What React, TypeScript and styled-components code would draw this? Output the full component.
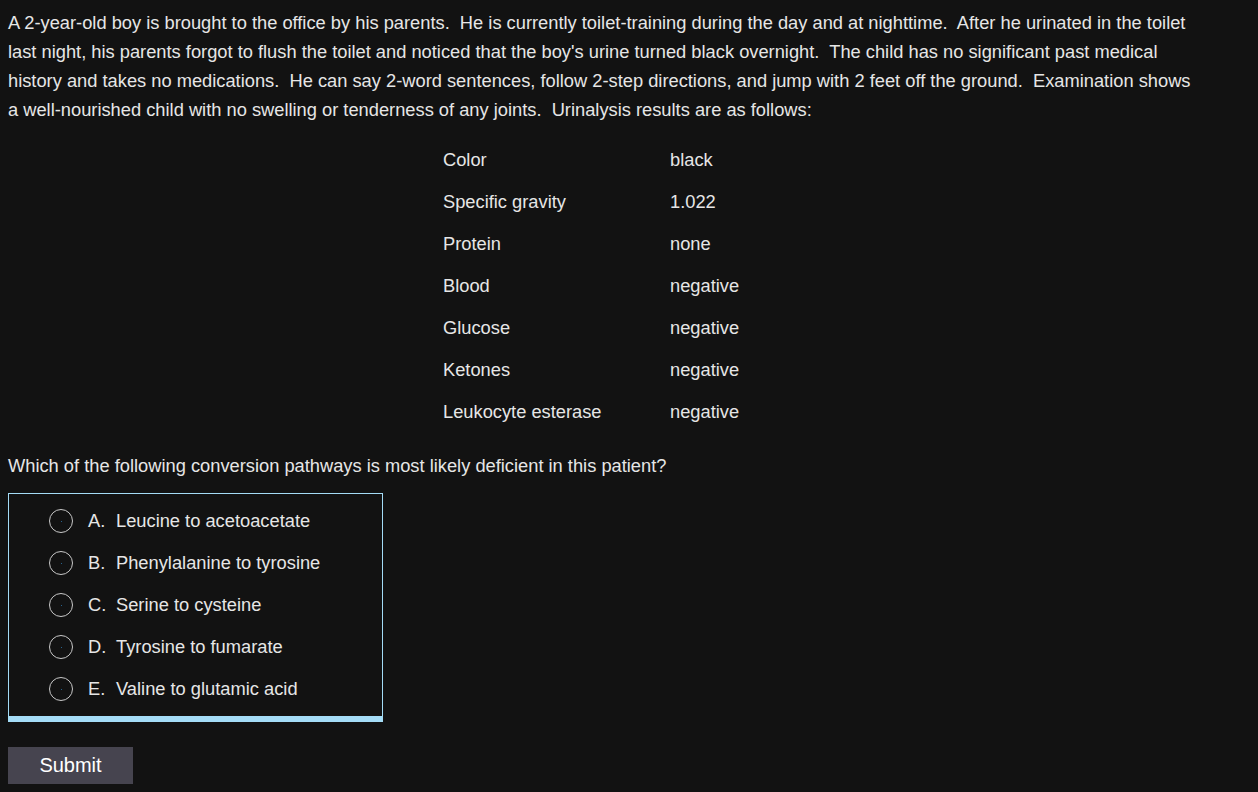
import React, { useState } from "react";
import styled, { createGlobalStyle } from "styled-components";

const GlobalStyle = createGlobalStyle`
  html, body {
    margin: 0;
    background: #121212;
  }
  body {
    padding: 8px;
    color: #e6e6e6;
    font-family: "Liberation Sans", Arial, sans-serif;
    font-size: 18.3px;
  }
`;

const Stem = styled.p`
  margin: 0;
  max-width: 1192px;
  line-height: 29px;
  white-space: pre-wrap;
`;

const LabTable = styled.table`
  margin: 15px auto 0;
  border-collapse: collapse;
  width: 388px;
`;

const LabCell = styled.td<{ $wide?: boolean }>`
  height: 42px;
  padding: 0 8px;
  width: ${(p) => (p.$wide ? "211px" : "auto")};
  vertical-align: middle;
`;

const Question = styled.p`
  margin: 18px 0 0;
  line-height: 29px;
`;

const Choices = styled.div`
  margin-top: 13px;
  width: 373px;
  border: 1px solid #a4dcf6;
  border-bottom: 6px solid #a4dcf6;
  padding: 6px 0 6px;
`;

const ChoiceRow = styled.label`
  display: flex;
  align-items: center;
  height: 42px;
  padding-left: 40px;
  cursor: pointer;
`;

const Radio = styled.span<{ $on: boolean }>`
  width: 24px;
  height: 24px;
  border-radius: 50%;
  border: 1px solid #c8c8c8;
  box-sizing: border-box;
  display: flex;
  align-items: center;
  justify-content: center;
  margin-right: 15px;
  &::after {
    content: "";
    width: ${(p) => (p.$on ? "12px" : "1px")};
    height: ${(p) => (p.$on ? "12px" : "1px")};
    border-radius: 50%;
    background: #2f7fb8;
  }
`;

const Letter = styled.span`
  width: 28px;
`;

const SubmitButton = styled.button`
  margin-top: 25px;
  width: 125px;
  height: 37px;
  border: none;
  background: #46444f;
  color: #ffffff;
  font-family: "Liberation Sans", Arial, sans-serif;
  font-size: 20px;
  cursor: pointer;
`;

const labs = [
  ["Color", "black"],
  ["Specific gravity", "1.022"],
  ["Protein", "none"],
  ["Blood", "negative"],
  ["Glucose", "negative"],
  ["Ketones", "negative"],
  ["Leukocyte esterase", "negative"],
];

const options = [
  ["A.", "Leucine to acetoacetate"],
  ["B.", "Phenylalanine to tyrosine"],
  ["C.", "Serine to cysteine"],
  ["D.", "Tyrosine to fumarate"],
  ["E.", "Valine to glutamic acid"],
];

const App: React.FC = () => {
  const [picked, setPicked] = useState<number | null>(null);

  return (
    <div>
      <GlobalStyle />
      <Stem>
        A 2-year-old boy is brought to the office by his parents.  He is currently toilet-training during the day and at nighttime.  After he urinated in the toilet last night, his parents forgot to flush the toilet and noticed that the boy's urine turned black overnight.  The child has no significant past medical history and takes no medications.  He can say 2-word sentences, follow 2-step directions, and jump with 2 feet off the ground.  Examination shows a well-nourished child with no swelling or tenderness of any joints.  Urinalysis results are as follows:
      </Stem>
      <LabTable>
        <tbody>
          {labs.map(([name, value]) => (
            <tr key={name}>
              <LabCell $wide>{name}</LabCell>
              <LabCell>{value}</LabCell>
            </tr>
          ))}
        </tbody>
      </LabTable>
      <Question>Which of the following conversion pathways is most likely deficient in this patient?</Question>
      <Choices>
        {options.map(([letter, text], i) => (
          <ChoiceRow key={letter} onClick={() => setPicked(i)}>
            <Radio $on={picked === i} />
            <Letter>{letter}</Letter>
            {text}
          </ChoiceRow>
        ))}
      </Choices>
      <SubmitButton>Submit</SubmitButton>
    </div>
  );
};

export default App;
